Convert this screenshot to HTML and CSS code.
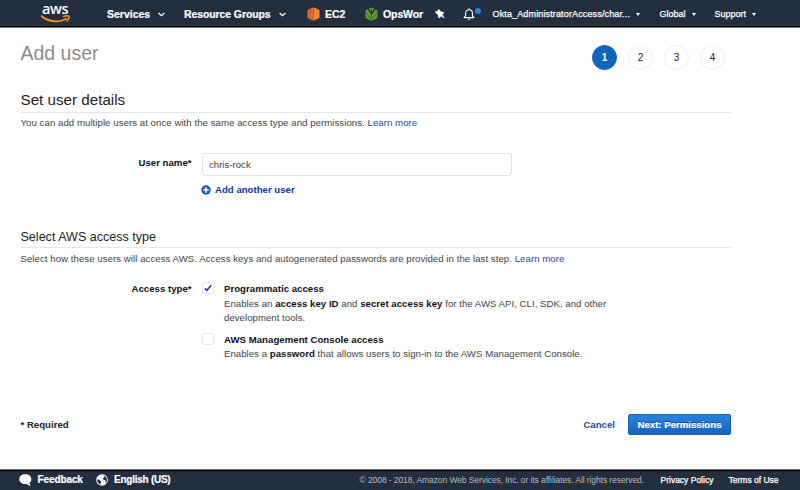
FILE: index.html
```html
<!DOCTYPE html>
<html lang="en">
<head>
<meta charset="utf-8">
<title>Add user</title>
<link rel="stylesheet" href="styles.css">
</head>
<body>
<header class="topbar">
  <a class="logo" aria-label="Home"><span class="logo-text">aws</span>
    <svg class="smile" viewBox="0 0 29 8"><path d="M.7 1.200C8 7.400 18.500 7.600 25 4" fill="none" stroke="#f7981f" stroke-width="1.900" stroke-linecap="round"/><path d="M22.600 1.500c2-.8 4.500-.9 5.200-.2.400 1-.4 3.200-1.700 4.800" fill="none" stroke="#f7981f" stroke-width="1.500" stroke-linecap="round"/></svg>
  </a>
  <a class="nav services"><span>Services</span><svg class="chev" viewBox="0 0 6 4"><path d="M.5.7 3 3 5.500.7"/></svg></a>
  <a class="nav groups"><span>Resource Groups</span><svg class="chev" viewBox="0 0 6 4"><path d="M.5.7 3 3 5.500.7"/></svg></a>
  <a class="nav ec2"><svg class="svc" viewBox="0 0 12 14"><path d="M0 3 6 .3v13.400L0 11z" fill="#d86f2a"/><path d="M6 .3 12 3v8l-6 2.700z" fill="#f58536"/><path d="M2.700 1.800v10.400" stroke="#b95a1f" stroke-width=".6"/><path d="M9 1.600v10.800" stroke="#dc7430" stroke-width=".5"/></svg><span>EC2</span></a>
  <a class="nav ops"><svg class="svc" viewBox="0 0 12 14"><path d="M0 3.500 2 2.300 6 8 10 2.300 12 3.500V11l-6 2.700L0 11z" fill="#659a3a"/><path d="M3.400 1.400 5.600.4V5zM8.600 1.400 6.400.4V5z" fill="#76a842"/><path d="M0 5.500 6 12.500M12 5.500 6 12.500M6 8v5" stroke="#3d5c25" stroke-width=".7" fill="none"/></svg><span>OpsWor</span></a>
  <svg class="pin" viewBox="0 0 10 10"><path d="M3.600.1 5.600 2.500 8.500 3.300 8.800 4.500 7.200 5.600 9.600 9.300 5.700 7 4.900 9 3.400 8.600 3 5.700.4 3.700.5 2.400 2.200 2.400z" fill="#fff" stroke="#fff" stroke-width=".3"/></svg>
  <span class="bell"><svg viewBox="0 0 12 13"><path d="M1 9.600h10L9.400 7.800V5C9.400 3 8 1.700 6 1.700S2.600 3 2.600 5v2.800z" fill="none" stroke="#fff" stroke-width="1.100" stroke-linejoin="round"/><path d="M5.300.5h1.400v1.300H5.300zM4.600 10.700h2.800c-.2 1.500-2.600 1.500-2.800 0z" fill="#fff"/></svg><i class="dot"></i></span>
  <a class="meta account"><span>Okta_AdministratorAccess/char...</span><i class="caret"></i></a>
  <a class="meta region"><span>Global</span><i class="caret"></i></a>
  <a class="meta support"><span>Support</span><i class="caret"></i></a>
</header>
<main class="page">
  <div class="title-row">
    <h1>Add user</h1>
    <ol class="steps"><li class="active">1</li><li>2</li><li>3</li><li>4</li></ol>
  </div>
  <section class="details">
    <h2>Set user details</h2>
    <p class="intro">You can add multiple users at once with the same access type and permissions. <a>Learn more</a></p>
    <div class="row name-row"><label for="name">User name*</label><input id="name" value="chris-rock"></div>
    <a class="add"><svg viewBox="0 0 10 10"><circle cx="5" cy="5" r="4.700" fill="#1559b5"/><path d="M5 2.200v5.600M2.200 5h5.600" stroke="#fff" stroke-width="1.700"/></svg><span>Add another user</span></a>
  </section>
  <section class="access">
    <h3>Select AWS access type</h3>
    <p class="intro">Select how these users will access AWS. Access keys and autogenerated passwords are provided in the last step. <a>Learn more</a></p>
    <div class="row type-row">
      <span class="label">Access type*</span>
      <div class="options">
        <div class="option"><span class="check"><svg viewBox="0 0 8 8"><path d="M.8 4.200 2.900 6.300 7.200 1.300" fill="none" stroke="#1237b5" stroke-width="1.500"/></svg></span>
          <div class="option-text"><b>Programmatic access</b><p>Enables an <b>access key ID</b> and <b>secret access key</b> for the AWS API, CLI, SDK, and other<br>development tools.</p></div></div>
        <div class="option"><span class="check"></span>
          <div class="option-text"><b>AWS Management Console access</b><p>Enables a <b>password</b> that allows users to sign-in to the AWS Management Console.</p></div></div>
      </div>
    </div>
  </section>
  <div class="actions"><b class="required">* Required</b><a class="cancel">Cancel</a><button type="button">Next: Permissions</button></div>
</main>
<footer class="bottombar">
  <svg class="speech" viewBox="0 0 13 12"><path d="M6.300.3c3.400 0 6 2 6 4.900 0 1.700-.8 2.800-1.900 3.600.1 1.200.7 2 1.500 2.800-1.800 0-3.300-.7-4.100-1.700C3.700 10.500.3 8.500.3 5.200c0-2.900 2.600-4.900 6-4.900z" fill="#fff"/></svg>
  <a class="feedback">Feedback</a>
  <svg class="globe" viewBox="0 0 12 12"><circle cx="6" cy="6" r="5.800" fill="#fff"/><path d="M6 1.300 8 1.800 8.300 3.300 7 4.300 7.300 5.700 9.300 6.300 9.700 8.300 8.700 9.800 10.500 8.300 11 6 10.300 3.500 8.700 2zM1.300 5.300 3.600 6 5.300 7.800 4.600 9.200 4.900 10.700 2.600 9.300 1.300 7.300z" fill="#232f3e"/></svg>
  <a class="language">English (US)</a>
  <span class="copyright">© 2008 - 2018, Amazon Web Services, Inc. or its affiliates. All rights reserved.</span>
  <a class="privacy">Privacy Policy</a>
  <a class="terms">Terms of Use</a>
</footer>
</body>
</html>
```
FILE: styles.css
```css
* { box-sizing: border-box; }
body { margin: 0; height: 490px; display: flex; flex-direction: column; background: #fff; color: #444; font: 9.65px/14.5px "Liberation Sans", Arial, sans-serif; overflow: hidden; }
h1, h2, h3, p, ol { margin: 0; padding: 0; font-weight: normal; }
a { color: #1f48ac; text-decoration: none; white-space: nowrap; }
b { color: #111; }
span { white-space: nowrap; }

.topbar { height: 28px; flex: none; display: flex; align-items: center; background: #232f3e; border-bottom: 1px solid #77797c; box-shadow: inset 0 -1px #000; padding: 1px 0 0 41px; }
.topbar a { display: flex; align-items: center; color: #fff; }
.topbar .logo { width: 66px; flex-direction: column; align-items: flex-start; }
.logo-text { font: 600 14.5px/13px "Open Sans", sans-serif; letter-spacing: -.4px; height: 13px; margin: -3px 0 0 1px; }
.smile { width: 29px; height: 8px; }
.nav { font-size: 10.5px; font-weight: bold; flex: none; -webkit-text-stroke: .2px #fff; }
.services { width: 77px; }
.groups { width: 123px; letter-spacing: -.1px; }
.groups .chev { margin-left: 8px; }
.ec2 { width: 58px; }
.ops { width: 70px; letter-spacing: -.1px; }
.chev { width: 7px; height: 5px; margin-left: 8px; fill: none; stroke: #fff; stroke-width: 1.1; }
.svc { width: 13px; height: 14px; margin-right: 5px; }
.pin { width: 10px; height: 10px; flex: none; }
.bell { position: relative; width: 29.5px; height: 13px; margin-left: 18px; flex: none; }
.bell svg { width: 12px; height: 13px; display: block; }
.dot { position: absolute; left: 12px; top: 0; width: 6px; height: 6px; border-radius: 50%; background: #2784e0; }
.meta { font-size: 9px; flex: none; -webkit-text-stroke: .25px #fff; }
.meta span { padding-top: 1px; }
.account { width: 167px; letter-spacing: .14px; }
.region { width: 55px; }
.caret { border: 2.500px solid transparent; border-top: 3px solid #fff; border-bottom: 0; margin-left: 6px; }

.page { flex: 1; padding: 0 69px 0 20.5px; display: flex; flex-direction: column; }
.title-row { height: 57px; display: flex; justify-content: space-between; padding-top: 13px; }
h1 { font-size: 19.5px; line-height: 24px; color: #8c8c8c; }
.steps { list-style: none; display: flex; gap: 11px; margin: 4px 6px 0 0; }
.steps li { width: 25px; height: 25px; border: 1px solid #eee; border-radius: 50%; color: #222; font-size: 10px; text-align: center; line-height: 24px; }
.steps .active { background: #1166bb; border-color: #1166bb; color: #fff; font-weight: bold; }
.details { height: 142px; }
h2 { height: 28px; font-size: 15.2px; line-height: 30px; color: #222; border-bottom: 1px solid #e5e5e5; }
.intro { line-height: 14px; padding-top: 4px; letter-spacing: .05px; }
.details .intro { padding-top: 3px; }
.row { display: flex; }
.name-row { margin-top: 23px; }
.row label, .label { width: 171px; margin-right: 10px; text-align: right; font-weight: bold; color: #111; }
.row label { padding-top: 3px; }
.label { padding-top: 1px; }
input { width: 310px; height: 23px; padding: 0 6.500px; border: 1px solid #e3e3e3; border-radius: 3px; font: inherit; color: #444; }
.add { display: flex; align-items: center; margin: 7px 0 0 180px; font-weight: bold; color: #073aa6; }
.add svg { width: 10px; height: 10px; margin-right: 4.500px; }
.access { height: 185px; }
h3 { height: 21px; font-size: 12.55px; line-height: 20px; color: #222; border-bottom: 1px solid #e8e8e8; }
.type-row { margin-top: 15px; }
.option { display: flex; height: 50.500px; }
.option-text { padding-top: 1px; letter-spacing: .025px; }
.check { width: 12px; height: 12px; margin: 1px 10.500px 0 0; border: 1px solid #e7e7e7; border-radius: 2px; flex: none; }
.check svg { display: block; width: 8px; height: 8px; margin: 1px; }
.actions { display: flex; align-items: center; height: 21px; margin-top: 2px; }
.required { margin-right: auto; color: #222; padding-top: 1px; }
.cancel { font-weight: bold; margin-right: 13px; padding-top: 1px; }
button { width: 103px; height: 21px; padding: 0; border: 1px solid #175fae; border-radius: 2px; background: linear-gradient(#2b83df, #1563bd); color: #fff; font: bold 9.65px "Liberation Sans", Arial, sans-serif; -webkit-text-stroke: .2px #fff; text-shadow: 0 -1px #174b87; }

.bottombar { height: 21px; flex: none; display: flex; align-items: center; background: #232f3e; border-top: 1px solid #6b6d70; box-shadow: inset 0 1px #000; padding-left: 19px; font-size: 8.500px; }
.bottombar a { color: #fff; }
.speech { width: 13px; height: 12px; }
.feedback, .language { font-size: 10px; font-weight: bold; letter-spacing: -.1px; -webkit-text-stroke: .2px #fff; }
.feedback { width: 58px; margin-left: 5.500px; }
.globe { width: 12px; height: 12px; }
.language { width: 245.500px; margin-left: 6.500px; letter-spacing: -.25px; }
.copyright { width: 301px; color: #b3b9bc; letter-spacing: -.085px; }
.privacy { width: 68px; -webkit-text-stroke: .25px #fff; }
.terms { -webkit-text-stroke: .25px #fff; }
```
